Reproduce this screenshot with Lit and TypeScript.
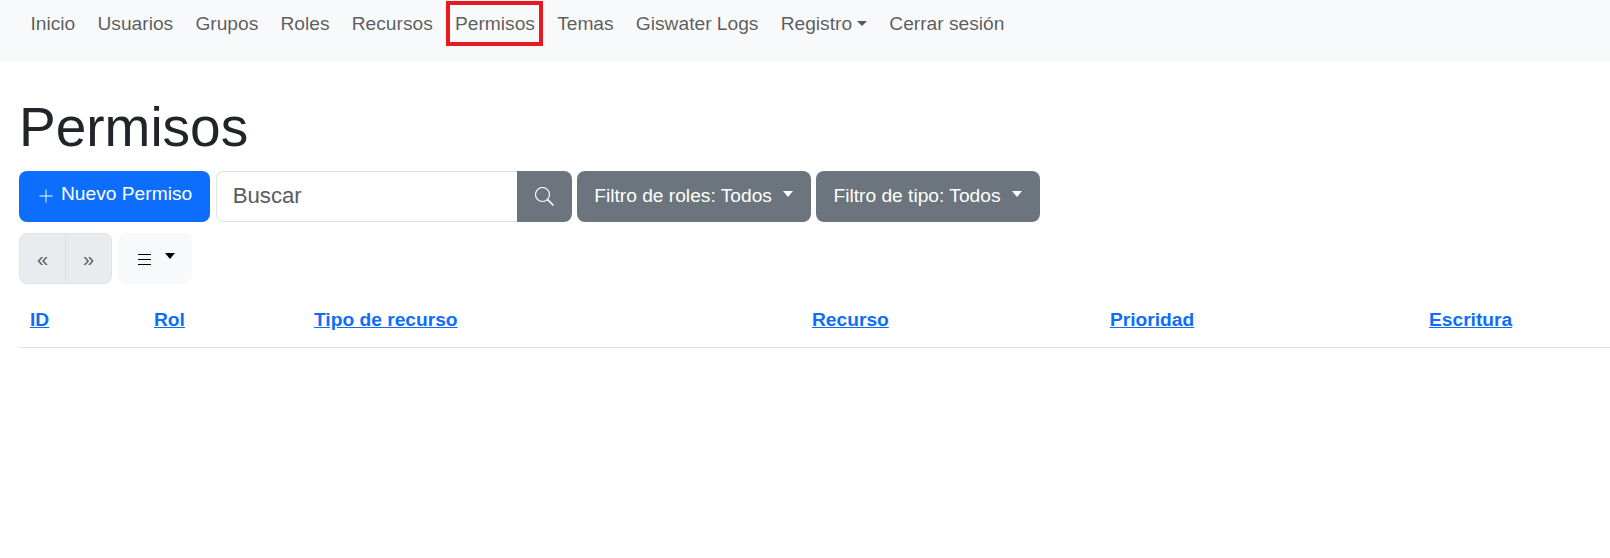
import { LitElement, html, css } from "lit";
import { customElement } from "lit/decorators.js";

const caret = html`<span class="caret"></span>`;

@customElement("app-root")
export class AppRoot extends LitElement {
  static styles = css`
    :host { display: block; font-family: "Liberation Sans", Arial, sans-serif; font-size: 19.2px; color: #212529; background: #fff; min-height: 558px; overflow: hidden; }
    * { box-sizing: border-box; }
    nav { display: flex; align-items: flex-start; background: #f8f9fa; height: 61px; padding: 0 12px 0 19.4px; }
    nav a { display: inline-flex; align-items: center; height: 48px; padding: 0 11.1px; color: rgba(0,0,0,.65); text-decoration: none; position: relative; }
    nav a.mark::after { content: ""; position: absolute; left: 2.5px; right: 2.8px; top: 1px; bottom: 2px; border: 4px solid #e8191f; }
    .caret { display: inline-block; width: 0; height: 0; border-top: 5.5px solid currentColor; border-left: 5px solid transparent; border-right: 5px solid transparent; margin-left: 5px; margin-bottom: 2px; }
    main { padding: 0 0 0 19px; }
    h1 { margin: 0; padding-top: 33px; font-weight: 400; font-size: 55px; line-height: 1.2; height: 110px; }
    .row { display: flex; gap: 5.5px; }
    .btn { display: inline-flex; align-items: center; height: 51px; border-radius: 8px; color: #fff; font: inherit; border: 0; padding: 0 18px 2px 17px; background: #6c757d; }
    .primary { background: #0d6efd; padding: 0 18px 6px; }
    .primary svg { margin-right: 6px; margin-top: 5px; }
    .btn .caret { border-top-width: 6px; border-left-width: 5.5px; border-right-width: 5.5px; margin-left: 11px; margin-bottom: 3px; }
    .search { display: flex; width: 356px; height: 51px; }
    .field { flex: 1; border: 1px solid #dee2e6; border-right: 0; border-radius: 8px 0 0 8px; padding: 0 16px 2px; font-size: 22.2px; display: flex; align-items: center; color: #595c5f; }
    .go { width: 55px; background: #6c757d; border-radius: 0 8px 8px 0; display: flex; align-items: center; justify-content: center; }
    .tools { margin-top: 11px; display: flex; gap: 6px; }
    .pager { display: flex; height: 51px; width: 93px; border: 1px solid #dee2e6; border-radius: 8px; background: #e9ecef; overflow: hidden; color: #5c6063; font-size: 20px; }
    .pager span { flex: 1; display: flex; align-items: center; justify-content: center; padding-top: 1px; }
    .pager span + span { border-left: 1px solid #dee2e6; }
    .cols { width: 74px; height: 51px; padding-left: 2px; background: #f8f9fa; border-radius: 8px; display: flex; align-items: center; justify-content: center; color: #000; }
    .cols svg { margin-top: 1px; }
    .cols .caret { border-top-width: 6px; border-left-width: 5.5px; border-right-width: 5.5px; margin-left: 14px; margin-bottom: 6px; }
    .table { display: grid; grid-template-columns: 124px 160px 498px 298px 319px 1fr; margin-top: 11px; border-bottom: 1px solid #dee2e6; height: 53px; width: 1600px; }
    .table div { padding: 11px 11px 0; line-height: 27px; }
    .table a { font-weight: 700; color: #0d6efd; text-decoration: underline; }
  `;

  render() {
    const links = ["Inicio", "Usuarios", "Grupos", "Roles", "Recursos"];
    return html`
      <nav>
        ${links.map((l) => html`<a href="#">${l}</a>`)}
        <a href="#" class="mark">Permisos</a>
        <a href="#">Temas</a>
        <a href="#">Giswater Logs</a>
        <a href="#">Registro${caret}</a>
        <a href="#">Cerrar sesión</a>
      </nav>
      <main>
        <h1>Permisos</h1>
        <div class="row">
          <button class="btn primary">
            <svg width="18" height="18" viewBox="0 0 16 16" fill="currentColor"><path d="M8 2a.4.4 0 0 1 .4.4v5.2h5.2a.4.4 0 0 1 0 .8H8.4v5.2a.4.4 0 0 1-.8 0V8.4H2.4a.4.4 0 0 1 0-.8h5.2V2.4A.4.4 0 0 1 8 2z"/></svg>
            Nuevo Permiso
          </button>
          <div class="search">
            <div class="field">Buscar</div>
            <div class="go">
              <svg width="19" height="19" viewBox="0 0 19 19" fill="none" stroke="#fff"><circle cx="7.5" cy="7.5" r="7" stroke-width="1.2"/><path d="M12.6 12.6l5.4 5.4" stroke-width="1.6" stroke-linecap="round"/></svg>
            </div>
          </div>
          <button class="btn">Filtro de roles: Todos${caret}</button>
          <button class="btn">Filtro de tipo: Todos${caret}</button>
        </div>
        <div class="tools">
          <div class="pager"><span>«</span><span>»</span></div>
          <div class="cols">
            <svg width="13" height="11" viewBox="0 0 13 11" fill="currentColor"><rect y="0" width="13" height="1"/><rect y="5" width="13" height="1"/><rect y="10" width="13" height="1"/></svg>
            ${caret}
          </div>
        </div>
        <div class="table">
          <div><a href="#">ID</a></div>
          <div><a href="#">Rol</a></div>
          <div><a href="#">Tipo de recurso</a></div>
          <div><a href="#">Recurso</a></div>
          <div><a href="#">Prioridad</a></div>
          <div><a href="#">Escritura</a></div>
        </div>
      </main>
    `;
  }
}
